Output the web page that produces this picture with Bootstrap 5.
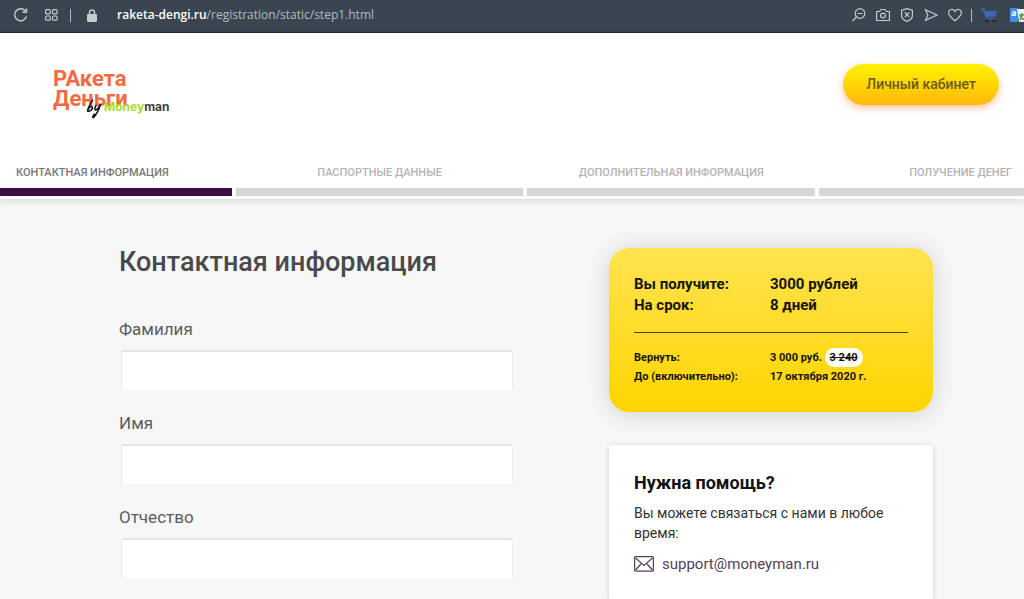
<!DOCTYPE html>
<html lang="ru">
<head>
<meta charset="utf-8">
<meta name="viewport" content="width=device-width, initial-scale=1">
<title>Контактная информация</title>
<link href="https://cdn.jsdelivr.net/npm/bootstrap@5.3.0/dist/css/bootstrap.min.css" rel="stylesheet">
<style>
body { font-family: Roboto, "Noto Sans", sans-serif; background: #f7f7f7; color: #4a4a4a; }
.browser-bar { height: 33px; background: #3a4550; border-bottom: 1px solid #20262b; color: #c3cad0; padding: 0 0 2px 13px; overflow: hidden; }
.browser-bar button { color: inherit; line-height: 0; }
.browser-bar svg { display: block; flex: none; }
.browser-tools { gap: 8px; margin-right: -2px; }
.address { font: 12px/16px "Open Sans", sans-serif; color: #b3bbc2; }
.address strong { color: #fff; font-weight: 600; }
.bar-line { width: 1px; height: 13px; background: #b3bbc2; }
.site-head { background: #fff; box-shadow: 0 1px 8px rgba(0,0,0,.16); padding-bottom: 3px; position: relative; }
.head-row { padding: 31px 25px 0 53px; height: 126px; }
.btn-cabinet { --bs-btn-color: #6b5a12; --bs-btn-hover-color: #6b5a12; --bs-btn-active-color: #6b5a12; font-size: 14px; line-height: 21px; font-weight: 500; padding: 10px 23px; border: 0; border-radius: 21px; background: linear-gradient(#fff200, #ffb80a); box-shadow: 0 3px 8px rgba(255,120,50,.45); }
.steps { display: grid; grid-template-columns: 232fr 288fr 288fr 205fr; column-gap: 4px; margin: 0; padding: 0; list-style: none; font-size: 11px; line-height: 16px; font-weight: 500; color: #b4b4b4; text-transform: uppercase; text-align: center; white-space: nowrap; }
.steps li { padding-top: 6px; }
.steps li::after { content: ""; display: block; height: 8px; margin-top: 7px; background: #d6d6d6; }
.steps span { display: block; }
.steps .current { color: #777; text-align: left; }
.steps .current span { padding-left: 16px; }
.steps .current::after { background: #3e0d43; }
.steps .final { text-align: right; }
.steps .final span { padding-right: 12px; }
.layout-grid { display: grid; grid-template-columns: 394fr 324fr; column-gap: 96px; padding: 49px 91px 0 119px; }
.page-title { font-size: 27px; line-height: 32px; font-weight: 500; margin: -2px 0 39px; }
.form-label { font-size: 17px; line-height: 24px; margin: 0 0 9px; color: #5c5c5c; display: block; }
.field-box { height: 41px; border: 1px solid #ebebeb; border-top: 2px solid #e4e4e4; border-bottom-color: #f7f7f7; border-radius: 3px; margin: 0 0 20px; background: #fff; }
.field-wrap { padding-left: 2px; }
.loan-card { border-radius: 20px; background: linear-gradient(#ffe352, #ffd500); box-shadow: 0 2px 24px rgba(0,0,0,.16); padding: 26px 25px; color: #17130a; margin-bottom: 33px; }
.loan-card dl { display: grid; grid-template-columns: 136px 1fr; margin: 0; }
.loan-card dd { margin: 0; }
.loan-main { font-size: 15px; line-height: 21px; font-weight: 700; }
.loan-card .loan-extra { font-size: 11px; line-height: 19px; font-weight: 700; border-top: 1px solid #4c4210; margin-top: 16px; padding-top: 15px; }
.old-sum { background: #fff; border-radius: 10px; padding: 3px 5px; }
.help-card { background: #fff; border-radius: 3px 3px 0 0; box-shadow: 0 1px 5px rgba(0,0,0,.17); padding: 25px 25px 0; color: #333; font-size: 14px; line-height: 20px; }
.help-card h2 { font-size: 18px; line-height: 26px; font-weight: 700; color: #111; margin: 0 0 7px; }
.help-card p { margin: 0 0 10px; }
.mail-link { font-size: 15px; line-height: 22px; color: #55405b; text-decoration: none; }
</style>
</head>
<body>
<div class="min-vh-100 d-flex flex-column">
  <div class="browser-bar d-flex align-items-center">
    <button class="btn p-0 border-0" aria-label="Обновить"><svg width="16" height="16" fill="none" stroke="currentColor" stroke-width="1.5"><path d="M12.4 4A6 6 0 1 0 13.500 9.500"/><path d="M9.500 5.200h4V1.500" /></svg></button>
    <button class="btn p-0 border-0 ms-3" aria-label="Экспресс-панель"><svg width="17" height="12" fill="none" stroke="currentColor" stroke-width="1.200"><rect x=".6" y=".6" width="4.600" height="4.200" rx="1"/><rect x="7.500" y=".6" width="4.600" height="4.200" rx="1"/><rect x=".6" y="7" width="4.600" height="4.200" rx="1"/><rect x="7.500" y="7" width="4.600" height="4.200" rx="1"/></svg></button>
    <span class="bar-line ms-2 me-3"></span>
    <svg width="10" height="13" fill="currentColor"><rect y="5" width="10" height="8" rx="1"/><path d="M2.500 6V3.500a2.500 2.500 0 0 1 5 0V6" fill="none" stroke="currentColor" stroke-width="1.500"/></svg>
    <span class="address ms-3 ps-1 text-nowrap"><strong>raketa-dengi.ru</strong>/registration/static/step1.html</span>
    <div class="browser-tools ms-auto d-flex align-items-center">
      <button class="btn p-0 border-0" aria-label="Масштаб"><svg width="16" height="16" fill="none" stroke="currentColor" stroke-width="1.200"><circle cx="9" cy="6.500" r="4.800"/><path d="M6.500 6.500h5M5.500 10 1.500 14"/></svg></button>
      <button class="btn p-0 border-0" aria-label="Снимок"><svg width="16" height="16" fill="none" stroke="currentColor" stroke-width="1.200"><path d="M1.600 4.500h3l1.400-2h4l1.400 2h3v9H1.600z"/><circle cx="8" cy="8.500" r="2.400"/></svg></button>
      <button class="btn p-0 border-0" aria-label="Блокировка рекламы"><svg width="16" height="16" fill="none" stroke="currentColor" stroke-width="1.200"><path d="M8 1.600 13.400 3.200V8.500C13.400 11.500 10.500 13.500 8 14.400 5.500 13.500 2.600 11.500 2.600 8.500V3.200zM5.800 5.500l4.400 4.600M10.200 5.500l-4.400 4.600"/></svg></button>
      <button class="btn p-0 border-0" aria-label="Отправить"><svg width="16" height="16" fill="none" stroke="currentColor" stroke-width="1.200"><path d="M2.500 2.800 14 8 2.500 13.200 4.800 8z"/></svg></button>
      <button class="btn p-0 border-0" aria-label="Закладка"><svg width="16" height="16" fill="none" stroke="currentColor" stroke-width="1.200"><path d="M8 13.800C4.500 11 1.600 8.800 1.600 5.800 1.600 2 6.500 1.200 8 4.600 9.500 1.200 14.400 2 14.400 5.800 14.400 8.800 11.500 11 8 13.800z"/></svg></button>
      <span class="bar-line"></span>
      <button class="btn p-0 border-0" aria-label="Корзина"><svg width="18" height="16"><path d="M1 1.500h3.300L5 4h12l-2 6H6z" fill="#3e68b4"/><path d="M4 2l2.500 9.500H15" fill="none" stroke="#3e68b4" stroke-width="1.200"/><circle cx="7" cy="13.700" r="1.500" fill="#20272e"/><circle cx="14" cy="13.700" r="1.500" fill="#20272e"/></svg></button>
      <button class="btn p-0 border-0 ms-1" aria-label="Переводчик"><svg width="16" height="16"><path d="M0 1h8v14H0z" fill="#3b8eea"/><path d="M7 2h9v13H9z" fill="#eef2ec"/><text x="1" y="9" font-family="Open Sans" font-size="9" font-weight="700" fill="#fff">a</text><path d="M9 8h6M12 6v2c0 2-1 4-2 5M10 9l4 4" stroke="#4b9b4e" stroke-width="1.500" fill="none"/></svg></button>
    </div>
  </div>

  <header class="site-head">
    <div class="head-row d-flex justify-content-between align-items-start">
      <a href="#" aria-label="РАкета Деньги by Moneyman">
        <svg width="120" height="60" font-family="Roboto, sans-serif" font-weight="700">
          <text x="0" y="22" font-size="22" fill="#f66a43">РАкета</text>
          <text x="0" y="42" font-size="22" fill="#f66a43">Деньги</text>
          <text x="51" y="47" font-family="Inter, sans-serif" font-size="12" fill="#a7dc22">Money<tspan fill="#3f3f43">man</tspan></text>
          <g fill="none" stroke="#111" stroke-width="1.500" stroke-linecap="round" stroke-linejoin="round"><path d="M39.500 36c-1.500 3-4 7-5 10.500 1.500-3.500 4.500-5 5-3 .3 2-3 4.500-5 3.500M43 41.500c-1.500 2.500-1.500 5 0 4.500 2-1 3-3 4.500-5.500-1.500 5-5 11-7 13-1.500.5-.5-2 1-3.500"/></g>
        </svg>
      </a>
      <button class="btn btn-cabinet">Личный кабинет</button>
    </div>
    <ol class="steps">
      <li class="current"><span>Контактная информация</span></li>
      <li><span>Паспортные данные</span></li>
      <li><span>Дополнительная информация</span></li>
      <li class="final"><span>Получение денег</span></li>
    </ol>
  </header>

  <main class="layout-grid flex-grow-1">
    <form>
      <h1 class="page-title">Контактная информация</h1>
      <label class="form-label" for="surname">Фамилия</label>
      <div class="field-wrap"><input class="form-control field-box" id="surname" type="text"></div>
      <label class="form-label" for="name">Имя</label>
      <div class="field-wrap"><input class="form-control field-box" id="name" type="text"></div>
      <label class="form-label" for="patronymic">Отчество</label>
      <div class="field-wrap"><input class="form-control field-box" id="patronymic" type="text"></div>
    </form>
    <aside class="d-flex flex-column">
      <section class="loan-card">
        <dl class="loan-main"><dt>Вы получите:</dt><dd>3000 рублей</dd><dt>На срок:</dt><dd>8 дней</dd></dl>
        <dl class="loan-extra"><dt>Вернуть:</dt><dd>3 000 руб. <s class="old-sum">3 240</s></dd><dt>До (включительно):</dt><dd>17 октября 2020 г.</dd></dl>
      </section>
      <section class="help-card flex-grow-1">
        <h2>Нужна помощь?</h2>
        <p>Вы можете связаться с нами в любое время:</p>
        <a class="mail-link d-flex align-items-center gap-2" href="mailto:support@moneyman.ru"><svg width="20" height="16" fill="none" stroke="currentColor" stroke-width="1.200"><rect x=".6" y=".6" width="18.800" height="14.600" rx="1"/><path d="M1.500 2 10 9.500 18.500 2M1.500 14 7 8M18.500 14 13 8"/></svg>support@moneyman.ru</a>
      </section>
    </aside>
  </main>
</div>
<script src="https://cdn.jsdelivr.net/npm/bootstrap@5.3.0/dist/js/bootstrap.bundle.min.js"></script>
</body>
</html>
